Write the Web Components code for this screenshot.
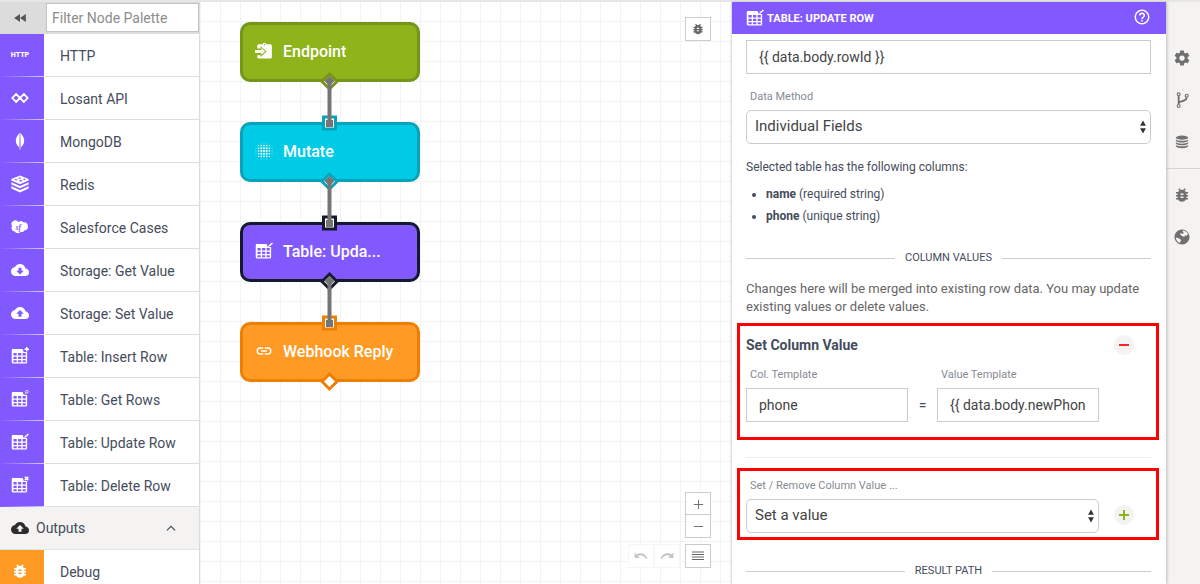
<!DOCTYPE html>
<html lang="en">
<head>
<meta charset="utf-8">
<title>Workflow Editor</title>
<style>
html,body{margin:0;height:100%}
body{font-family:Roboto,"Noto Sans",sans-serif;font-size:14px;color:#454c5b;overflow:hidden;background:#fff}
</style>
</head>
<body>
<workflow-editor></workflow-editor>
<script>
const CLOUD='M19.35,10.03C18.67,6.59 15.64,4 12,4C9.11,4 6.6,5.64 5.35,8.03C2.34,8.36 0,10.9 0,14A6,6 0 0,0 6,20H19A5,5 0 0,0 24,15C24,12.36 21.95,10.22 19.35,10.03Z';
const BUG='<path d="M14,12H10V10H14M14,16H10V14H14M20,8H17.19C16.74,7.22 16.12,6.55 15.37,6.04L17,4.41L15.59,3L13.42,5.17C12.96,5.06 12.49,5 12,5C11.51,5 11.04,5.06 10.59,5.17L8.41,3L7,4.41L8.62,6.04C7.88,6.55 7.26,7.22 6.81,8H4V10H6.09C6.04,10.33 6,10.66 6,11V12H4V14H6V15C6,15.34 6.04,15.67 6.09,16H4V18H6.81C7.85,19.79 9.78,21 12,21C14.22,21 16.15,19.79 17.19,18H20V16H17.91C17.96,15.67 18,15.34 18,15V14H20V12H18V11C18,10.66 17.96,10.33 17.91,10H20V8Z"/>';
const TABLE='<path fill-rule="evenodd" d="M3.5 2.500H15.500L17 6.500h4.500V20a2 2 0 0 1-2 2H3a2 2 0 0 1-2-2V4.500A2 2 0 0 1 3.500 2.500M3.300 8V11.300H7.600V8zM9.400 8V11.300H13.700V8zM15.500 8V11.300H19.700V8zM3.300 13.100V16H7.600V13.100zM9.400 13.100V16H13.700V13.100zM15.500 13.100V16H19.700V13.100zM3.300 17.800V20.300H7.600V17.800zM9.400 17.800V20.300H13.700V17.800zM15.500 17.800V20.300H19.700V17.800z"/>';
const dots=(()=>{let s='';for(let i=0;i<7;i++)for(let j=0;j<7;j++){const d=Math.max(Math.abs(i-3),Math.abs(j-3)),m=Math.abs(i-3)+Math.abs(j-3);if(d===3&&m>4)continue;const r=d===3?.6:m>3?.9:d===2?1.1:1.4;s+=`<circle cx="${12+(i-3)*3.6}" cy="${12+(j-3)*3.6}" r="${r}"/>`}return s})();
const ICONS={
 rewind:'<path d="M12 5v14L2 12zM22 5v14L12 12z"/>',
 losant:'<path fill="none" stroke="currentColor" stroke-width="2.400" d="M12 12L6.800 17.200L1.800 12L6.800 6.800L17.200 17.200L22.200 12L17.200 6.800z"/>',
 mongo:'<path d="M11.600 1C8 5 6.200 8.500 6.400 12c.2 4 2.200 6.500 4.800 8.500zM12.400 1C16 5 17.800 8.500 17.600 12c-.2 4-2.200 6.500-4.800 8.500zM11.500 20h1v3.500h-1z"/>',
 redis:'<path fill-rule="evenodd" d="M12 0.800L23.500 5.200V7.400L12 12.400L.5 7.400V5.200zM11 3l-1.500 1.200 2 .8 2.500-.8zM6 5.200l-1.800 1 3 1.200 2-1zM13.500 6.300l-3 1.600 2.500 1 2.400-1.600zM17.500 4.600l-2 1 2.500 1 2-1z"/><path d="M.5 9.500L12 14.500L23.500 9.500V12.500L12 17.500L.5 12.500zM.5 15L12 20L23.500 15V18L12 23.200L.5 18z"/>',
 salesforce:'<path d="M10 5.500a4.600 4.600 0 0 1 6.500.3a5.200 5.200 0 1 1 1.300 10.700a4 4 0 0 1-5 1.800a4.500 4.500 0 0 1-7.800-.2A4.600 4.600 0 0 1 1.500 10.800A4.800 4.800 0 0 1 10 5.500z"/><text x="6" y="15.500" font-size="10" font-style="italic" font-weight="700" font-family="Liberation Serif,serif" fill="#8259ff">sf</text>',
 down:`<path fill-rule="evenodd" d="M17,13L12,18L7,13H10V9H14V13${CLOUD}"/>`,
 up:`<path fill-rule="evenodd" d="M14,13V17H10V13H7L12,8L17,13${CLOUD}"/>`,
 tplus:TABLE+'<path d="M20 0h2v2h2v2h-2v2h-2V4h-2V2h2z"/>',
 tfind:TABLE+'<path fill="none" stroke="currentColor" stroke-width="1" d="M18 6l2-2M23 2.300a1.800 1.800 0 1 1-3.600 0a1.800 1.800 0 1 1 3.600 0"/>',
 tedit:TABLE+'<path d="M17.500 6.500L18 4.500L22.500.500L24 2L19.500 6z"/>',
 tx:TABLE+'<path fill="none" stroke="currentColor" stroke-width="2.200" d="M18.500 1l4.500 4.500M23 1l-4.500 4.500"/>',
 bug:BUG,
 chevron:'<path fill="none" stroke="currentColor" stroke-width="2" d="M5 16l7-7 7 7"/>',
 endpoint:'<path fill-rule="evenodd" d="M5 3h5a2.600 2.600 0 0 1 5 0H20.500a2 2 0 0 1 2 2V20a2 2 0 0 1-2 2H5a2 2 0 0 1-2-2V17.500H7.500V20L15.500 12.500L7.500 5.500V8.500H3V5a2 2 0 0 1 2-2zM12.500 2.200a1 1 0 1 0 .1 0z"/><path d="M0 10.500h8.500V8l5 4.500L8.500 17V14.500H0z"/>',
 dots,
 link:'<path d="M3.900,12C3.900,10.290 5.290,8.900 7,8.900H11V7H7A5,5 0 0,0 2,12A5,5 0 0,0 7,17H11V15.100H7C5.290,15.100 3.900,13.710 3.900,12M8,13H16V11H8V13M17,7H13V8.900H17C18.710,8.900 20.100,10.290 20.100,12C20.100,13.710 18.710,15.100 17,15.100H13V17H17A5,5 0 0,0 22,12A5,5 0 0,0 17,7Z"/>',
 help:'<path d="M11,18H13V16H11V18M12,2A10,10 0 0,0 2,12A10,10 0 0,0 12,22A10,10 0 0,0 22,12A10,10 0 0,0 12,2M12,20C7.590,20 4,16.410 4,12C4,7.590 7.590,4 12,4C16.410,4 20,7.590 20,12C20,16.410 16.410,20 12,20M12,6A4,4 0 0,0 8,10H10A2,2 0 0,1 12,8A2,2 0 0,1 14,10C14,12 11,11.750 11,15H13C13,12.750 16,12.500 16,10A4,4 0 0,0 12,6Z"/>',
 gear:'<path d="M12,15.500A3.500,3.500 0 0,1 8.500,12A3.500,3.500 0 0,1 12,8.500A3.500,3.500 0 0,1 15.500,12A3.500,3.500 0 0,1 12,15.500M19.430,12.970C19.470,12.650 19.500,12.330 19.500,12C19.500,11.670 19.470,11.340 19.430,11L21.540,9.370C21.730,9.220 21.780,8.950 21.660,8.730L19.660,5.270C19.540,5.050 19.270,4.960 19.050,5.050L16.560,6.050C16.040,5.660 15.500,5.320 14.870,5.070L14.500,2.420C14.460,2.180 14.250,2 14,2H10C9.750,2 9.540,2.180 9.500,2.420L9.130,5.070C8.500,5.320 7.960,5.660 7.440,6.050L4.950,5.050C4.730,4.960 4.460,5.050 4.340,5.270L2.340,8.730C2.210,8.950 2.270,9.220 2.460,9.370L4.570,11C4.530,11.340 4.500,11.670 4.500,12C4.500,12.330 4.530,12.650 4.570,12.970L2.460,14.630C2.270,14.780 2.210,15.050 2.340,15.270L4.340,18.730C4.460,18.950 4.730,19.030 4.950,18.950L7.440,17.940C7.960,18.340 8.500,18.680 9.130,18.930L9.500,21.580C9.540,21.820 9.750,22 10,22H14C14.250,22 14.460,21.820 14.500,21.580L14.870,18.930C15.500,18.670 16.040,18.340 16.560,17.940L19.050,18.950C19.270,19.030 19.540,18.950 19.660,18.730L21.660,15.270C21.780,15.050 21.730,14.780 21.540,14.630L19.430,12.970Z"/>',
 branch:'<g fill="none" stroke="currentColor" stroke-width="1.700"><circle cx="7" cy="3.500" r="2.200"/><circle cx="7" cy="21" r="2.200"/><circle cx="19" cy="5.500" r="2.200"/></g><path fill="none" stroke="currentColor" stroke-width="2.800" d="M7 6V18.500M7 16c2-3 11.500-1 12-8"/>',
 db:'<ellipse cx="12" cy="4.500" rx="10.500" ry="3.500"/><path d="M1.500 7.200q2 2.800 10.500 2.800t10.500-2.800v2.600q-2 3-10.500 3t-10.500-3zM1.500 12q2 2.800 10.500 2.800t10.500-2.800v2.400q-2 3-10.500 3t-10.500-3zM1.500 16.600q2 2.800 10.500 2.800t10.500-2.800v2.800q-2 3.400-10.500 3.400t-10.500-3.400z"/>',
 globe:'<path fill-rule="evenodd" d="M12 2a10 10 0 1 0 .01 0zM13.500 3.300C17 4 19.500 6 20.500 9L19 8.500L18 10.500L16 9.500L15 12L12 10.500L9.500 8.500L10 6.500L12.500 8L14.500 6.500L13 5zM3.800 12.500L7.500 13.500L11 16L9.500 18.500V20C6.500 19 4 16.500 3.800 12.500z"/>',
 plus:'<path fill="none" stroke="currentColor" stroke-width="2" d="M12 2V22M2 12H22"/>',
 minus:'<path fill="none" stroke="currentColor" stroke-width="2" d="M2 12H22"/>',
 add:'<path fill="none" stroke="currentColor" stroke-width="4" d="M12 2V22M2 12H22"/>',
 remove:'<path fill="none" stroke="currentColor" stroke-width="4" d="M2 12H22"/>',
 menu:'<path fill="none" stroke="currentColor" stroke-width="2" d="M0 4H24M0 9H24M0 14H24M0 19H24"/>',
 undo:'<path d="M1 6l3.500 3.500C10 5 20 7 23 16.500l-2.500.5C18 10.500 11 9 6.500 12L10 15.500H1z"/>',
 redo:'<path d="M23 6l-3.500 3.500C14 5 4 7 1 16.500l2.500.5C6 10.500 13 9 17.500 12L14 15.500H23z"/>',
 sort:'<path d="M12 1l5 9H7zM12 23l5-9H7z"/>'
};
const define=(name,render)=>customElements.define(name,class extends HTMLElement{
  constructor(){super();this.attachShadow({mode:'open'})}
  connectedCallback(){this.shadowRoot.innerHTML=render(k=>this.getAttribute(k)||'')}
});

define('wf-icon',a=>`<style>:host{display:inline-block;flex:none}svg{display:block;overflow:visible}</style>
<svg width="${a('size')||18}" height="${a('size')||18}" viewBox="0 0 24 24" fill="currentColor" aria-hidden="true">${ICONS[a('name')]}</svg>`);

define('palette-item',a=>`<style>
:host{display:grid;grid-template-columns:44px 1fr;height:43px;box-sizing:border-box}
.tile{background:var(--tile,#8259ff);color:#fff;display:flex;align-items:center;justify-content:center;font-size:7px;font-weight:900;padding-right:4px;border-bottom:1px solid transparent;border-image:linear-gradient(90deg,#8259ff,#d5cbf5) 1}
.name{border-bottom:1px solid #dedede;margin-left:1px;padding-left:15px;display:flex;align-items:center;padding-top:2px}
</style><div class="tile">${a('icon')?`<wf-icon name="${a('icon')}"></wf-icon>`:'<span>HTTP</span>'}</div><div class="name"><slot></slot></div>`);

define('node-palette',()=>`<style>
:host{display:flex;flex-direction:column;background:#fff;border-right:1px solid #dcdcdc;overflow:hidden}
.top{display:flex;flex:none;background:#dcdcdc;height:32px;box-sizing:border-box}
.top button{width:46px;flex:none;border:0;background:none;color:#555;display:flex;align-items:center;justify-content:center;padding:0 6px 0 0}
input{flex:1;min-width:0;margin:1px 0 2px;border:1px solid #c4c4c4;padding:0 5px;font:inherit;color:#444;background:#fff}
input::placeholder{color:#8c8c8c;opacity:1}
.group{flex:none;height:43px;box-sizing:border-box;border:0;border-bottom:1px solid #e4e4e4;background:#f4f3f2;display:flex;align-items:center;gap:7px;padding:0 21px 0 11px;font:inherit;color:inherit;text-align:left}
.group span{flex:1}.group wf-icon:first-child{color:#2c2c2c}
palette-item{flex:none}
</style>
<div class="top"><button aria-label="Collapse palette"><wf-icon name="rewind" size="14"></wf-icon></button><input aria-label="Filter Node Palette" placeholder="Filter Node Palette"></div>
<palette-item>HTTP</palette-item>
<palette-item icon="losant">Losant API</palette-item>
<palette-item icon="mongo">MongoDB</palette-item>
<palette-item icon="redis">Redis</palette-item>
<palette-item icon="salesforce">Salesforce Cases</palette-item>
<palette-item icon="down">Storage: Get Value</palette-item>
<palette-item icon="up">Storage: Set Value</palette-item>
<palette-item icon="tplus">Table: Insert Row</palette-item>
<palette-item icon="tfind">Table: Get Rows</palette-item>
<palette-item icon="tedit">Table: Update Row</palette-item>
<palette-item icon="tx">Table: Delete Row</palette-item>
<button class="group"><wf-icon name="up"></wf-icon><span>Outputs</span><wf-icon name="chevron" size="14"></wf-icon></button>
<palette-item icon="bug" style="--tile:#ff9a24">Debug</palette-item>`);

define('flow-node',a=>`<style>
:host{display:flex;align-items:center;gap:10px;box-sizing:border-box;width:180px;height:60px;border:3px solid var(--edge);border-radius:10px;background:var(--fill);color:#fff;font-size:16px;font-weight:500;padding:0 12px 2px}
span{white-space:nowrap;overflow:hidden;text-overflow:ellipsis}
</style><wf-icon name="${a('icon')}"></wf-icon><span><slot></slot></span>`);

define('tool-button',a=>`<style>:host{display:block}
button{display:flex;align-items:center;justify-content:center;width:26px;height:24px;box-sizing:border-box;border:1px solid #ccc;background:#fff;color:#666;padding:0}
:host([quiet]) button{border-color:#f6f6f6;color:#c4c4c4}
</style><button aria-label="${a('label')}"><wf-icon name="${a('icon')}" size="${a('size')||14}"></wf-icon></button>`);

define('flow-canvas',()=>{
 const wires=[[79,120],[179,220],[279,320]].map(([y,z])=>`<path d="M129.500 ${y}V${z}" stroke="#757575" stroke-width="4"/>`).join('');
 const outs=[[79,'#74941a'],[179,'#08a3bb'],[279,'#141a2e'],[379,'#ee7f05']].map(([y,c],i)=>`<path d="M129.500 ${y-7}l7.500 7.500l-7.500 7.500l-7.500-7.500z" fill="#fff" stroke="${c}" stroke-width="3"/>`+(i<3?`<path d="M129.500 ${y-5}l5 5l-5 5l-5-5z" fill="#757575"/>`:'')).join('');
 const ins=[[121,'#08a3bb'],[221,'#141a2e'],[321,'#ee7f05']].map(([y,c])=>`<rect x="123.500" y="${y-6}" width="12" height="12" fill="#fff" stroke="${c}" stroke-width="3"/><rect x="126" y="${y-3}" width="7" height="7" fill="#757575"/>`).join('');
 return `<style>
:host{display:block;position:relative;overflow:hidden;background:linear-gradient(90deg,#f3f3f3 1px,transparent 1px) 0 0/20px 20px,linear-gradient(#f3f3f3 1px,transparent 1px) 0 19px/20px 20px,#fff}
flow-node,svg{position:absolute;left:40px}
svg{left:0;top:0;overflow:visible;pointer-events:none}
.debug{position:absolute;top:15px;right:20px}
.tools{position:absolute;right:20px;bottom:16px;display:grid;grid-template-columns:25px 31px 26px;justify-items:end}
.zoom{grid-column:3;margin-bottom:6px}.zoom tool-button+tool-button{margin-top:-2px}
.tools .l{justify-self:start}
</style>
<flow-node icon="endpoint" style="top:20px;--fill:#8fb31a;--edge:#74941a">Endpoint</flow-node>
<flow-node icon="dots" style="top:120px;--fill:#00cbe6;--edge:#08a3bb">Mutate</flow-node>
<flow-node icon="tedit" style="top:220px;--fill:#8259ff;--edge:#141a2e">Table: Upda...</flow-node>
<flow-node icon="link" style="top:320px;--fill:#ff9a24;--edge:#ee7f05">Webhook Reply</flow-node>
<svg width="260" height="400">${outs}${ins}${wires}</svg>
<tool-button class="debug" icon="bug" label="Debug"></tool-button>
<div class="tools"><div class="zoom"><tool-button icon="plus" size="11" label="Zoom in"></tool-button><tool-button icon="minus" size="11" label="Zoom out"></tool-button></div>
<tool-button quiet icon="undo" label="Undo"></tool-button><tool-button quiet class="l" icon="redo" label="Redo"></tool-button><tool-button icon="menu" size="12" label="Menu"></tool-button></div>`});

define('form-field',a=>{
 const opt=a('kind')==='select',lab=a('label');
 return `<style>
:host{display:block;min-width:0}
label{display:block;font-size:11px;line-height:16px;color:#868a93;padding:0 4px 5px}
.box{position:relative;display:block}
input,select{display:block;width:100%;height:34px;box-sizing:border-box;border:1px solid #ccc;background:#fff;font:inherit;color:#444;margin:0;appearance:none;border-radius:0}
input{padding:0 12px}select{font-size:15px;padding:0 24px 2px 8px;border-radius:5px}
wf-icon{position:absolute;right:1px;top:10px;color:#333;pointer-events:none}
</style>${lab?`<label for="f">${lab}</label>`:''}<span class="box">${opt?`<select id="f"><option>${a('value')}</option></select><wf-icon name="sort" size="14"></wf-icon>`:`<input id="f" ${lab?'':'aria-label="Row ID"'} value="${a('value')}">`}</span>`});

define('section-rule',()=>`<style>:host{display:flex;align-items:center;gap:10px;font-size:11px;line-height:16px;text-transform:uppercase}
i{flex:1;height:1px;background:#ccc}</style><i></i><slot></slot><i></i>`);

define('round-button',a=>`<style>:host{display:block}
button{width:20px;height:20px;border:0;border-radius:50%;background:#f4f3f2;padding:0;display:flex;align-items:center;justify-content:center;color:inherit}
</style><button aria-label="${a('label')}"><wf-icon name="${a('icon')}" size="12"></wf-icon></button>`);

define('call-out',()=>`<style>:host{display:block;border:3px solid #f00;margin:0 -8px 0 -9px;padding:7px 5px 15px 6px}</style><slot></slot>`);

define('property-panel',()=>`<style>
:host{display:flex;flex-direction:column;background:#fff;border-left:1px solid #dcdcdc;overflow:hidden;position:relative;z-index:1;box-shadow:1px 0 3px #bbb}
header{flex:none;height:32px;background:#8259ff;color:#fff;display:flex;align-items:center;gap:3px;padding:0 15px 0 14px}
h1{flex:1;margin:0;font-family:"Liberation Sans Narrow",Roboto,sans-serif;font-size:11px;font-weight:700;white-space:nowrap}
header a{color:inherit}
main{padding:6px 15px 0 14px}
form-field.method{margin-top:15px}
p{margin:0}
.cols{font-size:12px;line-height:18px;margin-top:14px}
ul{margin:7px 0 0;padding:0 0 0 20px;font-size:12px;line-height:22px}
b{font-weight:700}
.first{margin-top:23px}
.note{font-size:13px;line-height:18px;color:#666;margin:14px 0 7px}
.row{display:grid;align-items:end}
.title{grid-template-columns:1fr 20px;padding-right:17px;align-items:center;margin-bottom:10px;line-height:24px}
h2{margin:0;font-size:14px;font-weight:700}
.pair{grid-template-columns:1fr 29px 1fr;padding-right:52px}
.eq{text-align:center;line-height:34px}
hr{border:0;height:1px;background:#eee;margin:17px 0 10px}
.add{grid-template-columns:1fr 20px;gap:15px;padding-right:17px}
.two{padding-bottom:4px}
.add round-button{margin-bottom:8px;color:#8fb31a}
.title round-button{color:#f22}
.last{margin-top:23px}
</style>
<header><wf-icon name="tedit"></wf-icon><h1>TABLE: UPDATE ROW</h1><a href="#help" aria-label="Help"><wf-icon name="help"></wf-icon></a></header>
<main>
<form-field value="{{ data.body.rowId }}"></form-field>
<form-field class="method" kind="select" label="Data Method" value="Individual Fields"></form-field>
<p class="cols">Selected table has the following columns:</p>
<ul><li><b>name</b> (required string)</li><li><b>phone</b> (unique string)</li></ul>
<section-rule class="first">Column Values</section-rule>
<p class="note">Changes here will be merged into existing row data. You may update existing values or delete values.</p>
<call-out><div class="row title"><h2>Set Column Value</h2><round-button icon="remove" label="Remove"></round-button></div>
<div class="row pair"><form-field label="Col. Template" value="phone"></form-field><span class="eq">=</span><form-field label="Value Template" value="{{ data.body.newPhone }}"></form-field></div></call-out>
<hr>
<call-out class="two"><div class="row add"><form-field kind="select" label="Set / Remove Column Value ..." value="Set a value"></form-field><round-button icon="add" label="Add"></round-button></div></call-out>
<section-rule class="last">Result Path</section-rule>
</main>`);

define('tool-rail',()=>`<style>
:host{display:block;background:#f4f3f2}
nav{display:flex;flex-direction:column;color:#707070}
button{border:0;background:none;color:inherit;height:42px;padding:0 3px 0 0;display:flex;align-items:center;justify-content:center}
.a{padding:35px 0 5px;border-bottom:1px solid #d4d4d4}.b{padding-top:5px}
</style><nav class="a"><button aria-label="Settings"><wf-icon name="gear"></wf-icon></button><button aria-label="Versions"><wf-icon name="branch" size="16"></wf-icon></button><button aria-label="Storage"><wf-icon name="db" size="14"></wf-icon></button></nav>
<nav class="b"><button aria-label="Debug"><wf-icon name="bug"></wf-icon></button><button aria-label="Globals"><wf-icon name="globe"></wf-icon></button></nav>`);

define('workflow-editor',()=>`<style>
:host{display:grid;grid-template-columns:200px minmax(0,1fr) 435px 34px;height:100vh;box-sizing:border-box;border-top:2px solid #e6e6e6}
:host>*{min-height:0}
</style><node-palette></node-palette><flow-canvas></flow-canvas><property-panel></property-panel><tool-rail></tool-rail>`);
</script>
</body>
</html>
